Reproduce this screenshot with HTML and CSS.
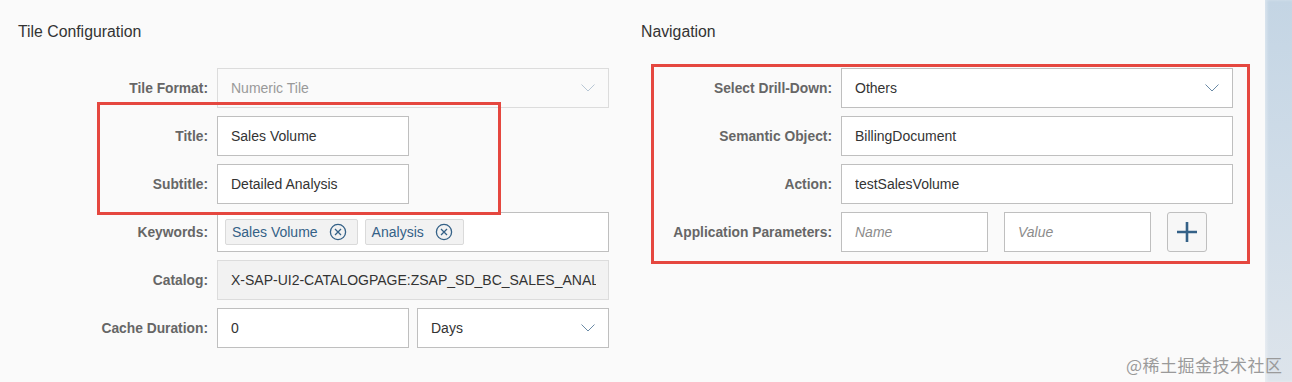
FILE: index.html
```html
<!DOCTYPE html>
<html lang="en">
<head>
<meta charset="utf-8">
<title>Tile Configuration</title>
<link rel="stylesheet" href="styles.css">
</head>
<body>
<div class="page">
  <main class="panel">
    <section class="col col-left">
      <h2 class="heading">Tile Configuration</h2>
      <div class="form">
        <label class="lbl">Tile Format:</label>
        <div class="field select disabled"><span class="val">Numeric Tile</span><svg class="chev" viewBox="0 0 14 8" width="14" height="8"><path d="M0.5 0.5 L7 7 L13.5 0.5" fill="none" stroke="currentColor" stroke-width="1"/></svg></div>

        <label class="lbl">Title:</label>
        <div class="field short"><span class="val">Sales Volume</span></div>

        <label class="lbl">Subtitle:</label>
        <div class="field short"><span class="val">Detailed Analysis</span></div>

        <label class="lbl">Keywords:</label>
        <div class="field tokens">
          <span class="token">Sales Volume<svg class="tx" viewBox="0 0 18 18" width="18" height="18"><circle cx="9" cy="9" r="7.6" fill="none" stroke="currentColor" stroke-width="1.3"/><path d="M6 6 L12 12 M12 6 L6 12" stroke="currentColor" stroke-width="1.3"/></svg></span>
          <span class="token">Analysis<svg class="tx" viewBox="0 0 18 18" width="18" height="18"><circle cx="9" cy="9" r="7.6" fill="none" stroke="currentColor" stroke-width="1.3"/><path d="M6 6 L12 12 M12 6 L6 12" stroke="currentColor" stroke-width="1.3"/></svg></span>
        </div>

        <label class="lbl">Catalog:</label>
        <div class="field readonly"><span class="val clip">X-SAP-UI2-CATALOGPAGE:ZSAP_SD_BC_SALES_ANALYSIS</span></div>

        <label class="lbl">Cache Duration:</label>
        <div class="pair">
          <div class="field short"><span class="val">0</span></div>
          <div class="field select short"><span class="val">Days</span><svg class="chev" viewBox="0 0 14 8" width="14" height="8"><path d="M0.5 0.5 L7 7 L13.5 0.5" fill="none" stroke="currentColor" stroke-width="1"/></svg></div>
        </div>
      </div>
    </section>

    <section class="col col-right">
      <h2 class="heading">Navigation</h2>
      <div class="form">
        <label class="lbl">Select Drill-Down:</label>
        <div class="field select"><span class="val">Others</span><svg class="chev" viewBox="0 0 14 8" width="14" height="8"><path d="M0.5 0.5 L7 7 L13.5 0.5" fill="none" stroke="currentColor" stroke-width="1"/></svg></div>

        <label class="lbl">Semantic Object:</label>
        <div class="field"><span class="val">BillingDocument</span></div>

        <label class="lbl">Action:</label>
        <div class="field"><span class="val">testSalesVolume</span></div>

        <label class="lbl">Application Parameters:</label>
        <div class="params">
          <div class="field param"><span class="val ph">Name</span></div>
          <div class="field param"><span class="val ph">Value</span></div>
          <button class="add" type="button" aria-label="Add"><svg viewBox="0 0 22 22" width="22" height="22"><path d="M11 1 V21 M1 11 H21" stroke="currentColor" stroke-width="2.6"/></svg></button>
        </div>
      </div>
    </section>

    <div class="mark mark-left"></div>
    <div class="mark mark-right"></div>
  </main>
  <aside class="strip"></aside>
  <div class="watermark">@稀土掘金技术社区</div>
</div>
</body>
</html>
```

FILE: styles.css
```css
* { box-sizing: border-box; }

html, body {
  margin: 0;
  padding: 0;
  width: 1292px;
  height: 382px;
  overflow: hidden;
  background: #fafafa;
  font-family: "Liberation Sans", Arial, sans-serif;
  font-size: 14px;
  color: #333;
}

.page {
  position: relative;
  display: flex;
  width: 1292px;
  height: 382px;
}

.panel {
  position: relative;
  display: flex;
  width: 1265px;
  height: 382px;
  background: #fafafa;
}

.strip {
  width: 27px;
  height: 382px;
  background: linear-gradient(180deg, #c4d5e4 0%, #cfdce8 45%, #dde4eb 100%);
  box-shadow: inset 2px 0 3px rgba(255,255,255,0.35);
}

.col {
  display: flex;
  flex-direction: column;
  padding-top: 22px;
}

.col-left { width: 624px; }
.col-right { width: 641px; }

.heading {
  margin: 0 0 26px 0;
  height: 20px;
  line-height: 20px;
  font-size: 15.8px;
  font-weight: normal;
  color: #333;
}

.col-left .heading { padding-left: 18px; }
.col-right .heading { padding-left: 17px; }

.form {
  display: grid;
  grid-template-columns: 208px 392px;
  column-gap: 9px;
  row-gap: 8px;
  grid-auto-rows: 40px;
}

.lbl {
  display: flex;
  align-items: center;
  justify-content: flex-end;
  font-weight: bold;
  font-size: 13.8px;
  color: #666;
  white-space: nowrap;
}

.field {
  display: flex;
  align-items: center;
  height: 40px;
  padding: 0 12px 0 13px;
  background: #fff;
  border: 1px solid #bfbfbf;
  color: #333;
  overflow: hidden;
}

.field.short { width: 192px; }

.val {
  flex: 1;
  white-space: nowrap;
  overflow: hidden;
}

.val.clip { text-overflow: clip; }

.chev {
  flex: none;
  color: #6a8aa6;
  margin-right: 1px;
}

.select.disabled {
  background: #fafafa;
  border-color: #dcdcdc;
  color: #999;
}

.select.disabled .chev { color: #b8c7d5; }

.readonly {
  background: #f2f2f2;
  border-color: #dcdcdc;
}

.tokens {
  padding: 0 6px 0 7px;
  gap: 7px;
}

.token {
  display: inline-flex;
  align-items: center;
  height: 26px;
  padding: 0 10px 0 6px;
  gap: 11px;
  background: #f2f2f2;
  border: 1px solid #dadada;
  border-radius: 2px;
  color: #346187;
  font-size: 14px;
}

.tx { color: #346187; }

.pair {
  display: flex;
  gap: 8px;
}

.params {
  display: flex;
  gap: 16px;
}

.field.param {
  width: 147px;
  padding-left: 13px;
}

.ph {
  color: #8c8c8c;
  font-style: italic;
}

.add {
  width: 40px;
  height: 40px;
  padding: 0;
  display: flex;
  align-items: center;
  justify-content: center;
  background: #f7f7f7;
  border: 1px solid #bfbfbf;
  border-radius: 3px;
  color: #346187;
}

.mark {
  position: absolute;
  border: 3px solid #e5473f;
  pointer-events: none;
}

.mark-left {
  left: 97px;
  top: 102px;
  width: 404px;
  height: 113px;
}

.mark-right {
  left: 651px;
  top: 64px;
  width: 599px;
  height: 200px;
}

.watermark {
  position: absolute;
  left: 1126px;
  top: 353px;
  font-family: "Noto Sans CJK SC", "Liberation Sans", sans-serif;
  font-size: 17px;
  line-height: 24px;
  letter-spacing: 0.5px;
  color: #9a9a9a;
  white-space: nowrap;
}
```
